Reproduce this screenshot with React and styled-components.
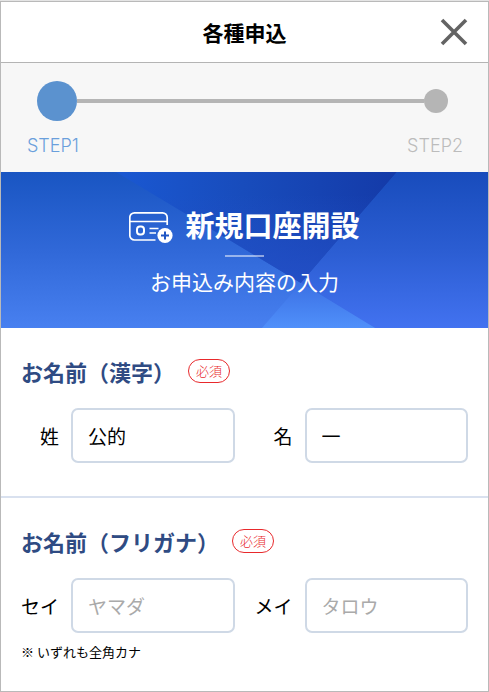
import React from 'react';
import styled, { createGlobalStyle } from 'styled-components';

const GlobalStyle = createGlobalStyle`
  * {
    box-sizing: border-box;
  }

  body {
    margin: 0;
    padding-top: 1px;
    background: #e4e4e4;
    color: #000;
    font-family: 'Noto Sans CJK JP', sans-serif;
  }
`;

const Page = styled.div`
  min-height: calc(100vh - 1px);
  border: 1px solid #b9b9b9;
  background: #fff;
`;

const Header = styled.header`
  display: grid;
  grid-template-columns: 1fr auto 1fr;
  align-items: center;
  height: 61px;
  padding: 0 20px;
  border-bottom: 1px solid #b4b4b4;
`;

const HeaderTitle = styled.h1`
  grid-column: 2;
  margin: 0;
  font-size: 21px;
  line-height: 28px;
  font-weight: 700;
`;

const CloseButton = styled.button`
  justify-self: end;
  display: flex;
  padding: 0;
  border: 0;
  background: none;
  color: #636363;
  cursor: pointer;
`;

const Stepper = styled.div`
  padding: 18px 0 13px;
  background: #f7f7f7;
`;

const Track = styled.div`
  display: flex;
  align-items: center;
  padding: 0 40px 0 36px;
`;

const Dot = styled.span`
  width: ${({ $active }) => ($active ? 40 : 24)}px;
  height: ${({ $active }) => ($active ? 40 : 24)}px;
  border-radius: 50%;
  background: ${({ $active }) => ($active ? '#5b92cf' : '#b5b5b5')};
`;

const TrackLine = styled.span`
  flex: 1;
  height: 4px;
  background: #b5b5b5;
`;

const StepLabels = styled.div`
  display: flex;
  justify-content: space-between;
  padding: 12px 25px 0 26px;
  font-family: Inter, sans-serif;
  font-size: 18px;
  line-height: 26px;
  font-weight: 300;
`;

const StepLabel = styled.span`
  color: ${({ $active }) => ($active ? '#6a9fdc' : '#bcbcbc')};
`;

const Banner = styled.section`
  position: relative;
  display: flex;
  flex-direction: column;
  align-items: center;
  padding: 36px 0 33px;
  color: #fff;
`;

const BannerArt = styled.svg`
  position: absolute;
  inset: 0;
  width: 100%;
  height: 100%;
`;

const BannerTitle = styled.h2`
  position: relative;
  display: flex;
  align-items: flex-start;
  gap: 12px;
  margin: 0;
  font-size: 29px;
  line-height: 32px;
  font-weight: 700;
`;

const BannerRule = styled.span`
  position: relative;
  width: 39px;
  height: 2px;
  margin: 11px 0 10px;
  background: rgba(255, 255, 255, 0.5);
`;

const BannerLead = styled.p`
  position: relative;
  margin: 0;
  font-size: 21px;
  line-height: 28px;
`;

const Section = styled.section`
  padding: 30px 20px 33px;

  & + & {
    border-top: 2px solid #d9e1ef;
  }

  &:last-child {
    padding-bottom: 20px;
  }
`;

const SectionHead = styled.div`
  display: flex;
  align-items: center;
  gap: 13px;
  margin-bottom: 24px;
`;

const SectionTitle = styled.h3`
  margin: 0;
  color: #2f4b83;
  font-size: 22px;
  line-height: 26px;
  font-weight: 700;
`;

const Required = styled.span`
  padding: 0 7px;
  border: 1px solid #e8292c;
  border-radius: 12px;
  color: #e8292c;
  font-size: 13px;
  line-height: 22px;
  font-weight: 300;
`;

const Fields = styled.div`
  display: grid;
  grid-template-columns: repeat(2, minmax(0, 1fr));
  gap: 20px;
`;

const Field = styled.label`
  display: flex;
  align-items: center;
  gap: 12px;
`;

const FieldName = styled.span`
  flex: 0 0 38px;
  font-size: 19px;
  line-height: 28px;
  text-align: right;
`;

const Input = styled.input`
  flex: 1;
  min-width: 0;
  height: 55px;
  padding: 0 15px;
  border: 2px solid #cfd9e6;
  border-radius: 7px;
  background: #fff;
  color: #000;
  font-family: inherit;
  font-size: 19px;

  &::placeholder {
    color: #aaa;
  }
`;

const Note = styled.p`
  margin: 9px 0 0;
  font-size: 13px;
  line-height: 20px;
`;

const CloseIcon = () => (
  <svg width="28" height="28" viewBox="0 0 28 28" fill="none" stroke="currentColor" strokeWidth="3.6">
    <path d="M2 2 26 26M26 2 2 26" />
  </svg>
);

const CardIcon = () => (
  <svg width="44" height="36" viewBox="0 -4 44 36" fill="none">
    <path
      d="M26.5 28H5.5A4.7 4.7 0 0 1 .8 23.3V5.5A4.7 4.7 0 0 1 5.5.8H33.5A4.7 4.7 0 0 1 38.2 5.5V13"
      stroke="#fff"
      strokeWidth="1.7"
    />
    <path d="M1 9.5H38" stroke="#fff" strokeWidth="1.5" />
    <rect x="8" y="14.5" width="7" height="8" rx="3" stroke="#fff" strokeWidth="2" />
    <path d="M20.5 16.5H29.5M20.5 21H27" stroke="#fff" strokeWidth="1.6" />
    <circle cx="36" cy="23.5" r="7.6" fill="#fff" />
    <path d="M36 19.5V27.5M32 23.5H40" stroke="#1f56c4" strokeWidth="2" />
  </svg>
);

const BannerBackground = () => (
  <BannerArt viewBox="0 0 487 156" preserveAspectRatio="none" aria-hidden="true">
    <defs>
      <linearGradient id="base" x1="0" y1="0" x2="0" y2="1">
        <stop offset="0" stopColor="#1955c2" />
        <stop offset="0.5" stopColor="#3068d8" />
        <stop offset="1" stopColor="#4880f0" />
      </linearGradient>
      <linearGradient id="top" x1="0" y1="0" x2="1" y2="0">
        <stop offset="0" stopColor="#1a58d2" />
        <stop offset="0.45" stopColor="#184cbc" />
        <stop offset="1" stopColor="#143aa8" />
      </linearGradient>
      <linearGradient id="topFade" x1="0" y1="0" x2="0" y2="1">
        <stop offset="0.2" stopColor="#2450c8" stopOpacity="0" />
        <stop offset="1" stopColor="#2450c8" stopOpacity="0.9" />
      </linearGradient>
      <linearGradient id="side" x1="0" y1="0" x2="0" y2="1">
        <stop offset="0" stopColor="#184cbc" />
        <stop offset="0.5" stopColor="#2b5dd2" />
        <stop offset="1" stopColor="#4272f0" />
      </linearGradient>
      <linearGradient id="peak" x1="0" y1="0" x2="0" y2="1">
        <stop offset="0" stopColor="#3b70e4" />
        <stop offset="1" stopColor="#5090fa" />
      </linearGradient>
    </defs>
    <path d="M0 0H487V156H0Z" fill="url(#base)" />
    <path d="M115 0H396L300 111Z" fill="url(#top)" />
    <path d="M115 0H396L300 111Z" fill="url(#topFade)" />
    <path d="M396 0H487V156H374L300 111Z" fill="url(#side)" />
    <path d="M300 111 374 156H261Z" fill="url(#peak)" />
  </BannerArt>
);

const NameField = ({ label, ...props }) => (
  <Field>
    <FieldName>{label}</FieldName>
    <Input type="text" {...props} />
  </Field>
);

const App = () => {
  return (
    <>
      <GlobalStyle />
      <Page>
        <Header>
          <HeaderTitle>各種申込</HeaderTitle>
          <CloseButton type="button" aria-label="閉じる">
            <CloseIcon />
          </CloseButton>
        </Header>

        <Stepper>
          <Track>
            <Dot $active />
            <TrackLine />
            <Dot />
          </Track>
          <StepLabels>
            <StepLabel $active>STEP1</StepLabel>
            <StepLabel>STEP2</StepLabel>
          </StepLabels>
        </Stepper>

        <Banner>
          <BannerBackground />
          <BannerTitle>
            <CardIcon />
            新規口座開設
          </BannerTitle>
          <BannerRule />
          <BannerLead>お申込み内容の入力</BannerLead>
        </Banner>

        <form>
          <Section>
            <SectionHead>
              <SectionTitle>お名前（漢字）</SectionTitle>
              <Required>必須</Required>
            </SectionHead>
            <Fields>
              <NameField label="姓" name="lastName" defaultValue="公的" />
              <NameField label="名" name="firstName" defaultValue="一" />
            </Fields>
          </Section>

          <Section>
            <SectionHead>
              <SectionTitle>お名前（フリガナ）</SectionTitle>
              <Required>必須</Required>
            </SectionHead>
            <Fields>
              <NameField label="セイ" name="lastNameKana" placeholder="ヤマダ" />
              <NameField label="メイ" name="firstNameKana" placeholder="タロウ" />
            </Fields>
            <Note>※ いずれも全角カナ</Note>
          </Section>
        </form>
      </Page>
    </>
  );
};

export default App;
